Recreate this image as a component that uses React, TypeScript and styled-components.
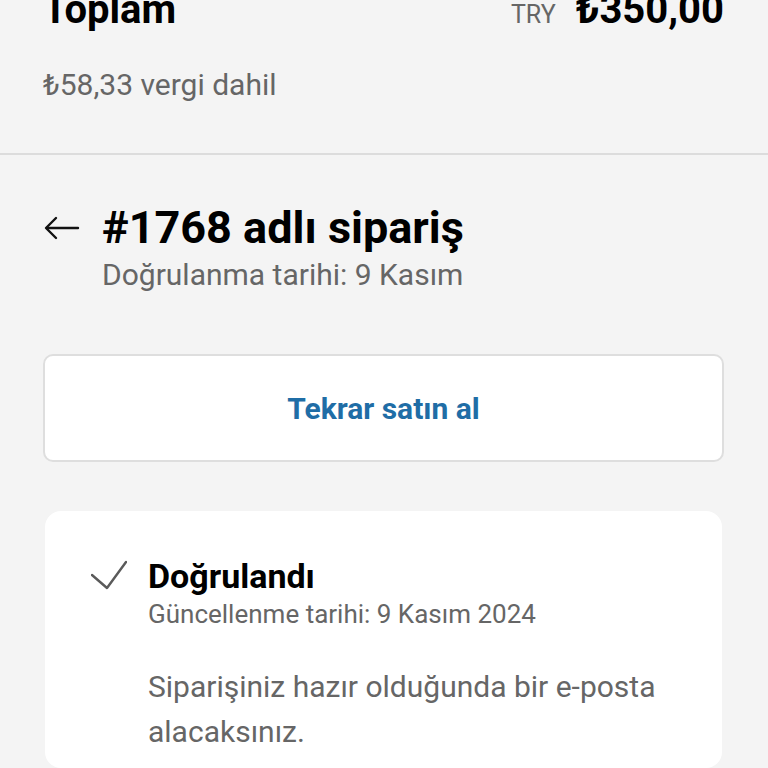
import React from "react";
import styled, { createGlobalStyle } from "styled-components";

const Global = createGlobalStyle`
  html, body { margin: 0; padding: 0; background: #f4f4f4; }
  body { font-family: Roboto, "Noto Sans", sans-serif; color: #000; }
`;

const Page = styled.div`
  width: 768px;
  height: 768px;
  overflow: hidden;
  background: #f4f4f4;
  display: flex;
  flex-direction: column;
`;

const Summary = styled.section`
  padding: 0 44px 0 43px;
  margin-top: -14px;
  border-bottom: 2px solid #dcdcdc;
  height: 169px;
  box-sizing: border-box;
  display: flex;
  flex-direction: column;
  flex: none;
`;

const TotalRow = styled.div`
  display: flex;
  justify-content: space-between;
  align-items: baseline;
  height: 48px;
  line-height: 48px;
`;

const TotalLabel = styled.div`
  font-size: 40px;
  font-weight: 700;
`;

const Amount = styled.div`
  display: flex;
  align-items: baseline;
  gap: 20px;
`;

const Currency = styled.span`
  font-size: 25px;
  color: #666;
`;

const Price = styled.span`
  font-size: 40px;
  font-weight: 700;
`;

const Tax = styled.div`
  margin-top: 33px;
  font-size: 30px;
  line-height: 36px;
  color: #666;
`;

const Header = styled.header`
  display: flex;
  align-items: flex-start;
  gap: 22px;
  padding: 46px 44px 0 44px;
  flex: none;
`;

const BackButton = styled.button`
  border: none;
  background: none;
  padding: 0;
  margin-top: 15px;
  width: 36px;
  height: 24px;
  display: flex;
  align-items: center;
  cursor: pointer;
`;

const HeaderText = styled.div`
  display: flex;
  flex-direction: column;
`;

const Title = styled.h1`
  margin: 0;
  font-size: 45px;
  font-weight: 700;
  line-height: 54px;
`;

const Subtitle = styled.div`
  font-size: 30px;
  color: #666;
  line-height: 40px;
`;

const BuyAgain = styled.button`
  margin: 59px 44px 0 43px;
  height: 108px;
  flex: none;
  background: #fff;
  border: 2px solid #dedede;
  border-radius: 10px;
  font-family: Roboto, sans-serif;
  font-size: 30px;
  font-weight: 700;
  color: #1f6da6;
  cursor: pointer;
`;

const Card = styled.section`
  margin: 49px 46px 0 45px;
  background: #fff;
  border-radius: 16px;
  padding: 44px 48px 0 46px;
  flex: 1;
`;

const StatusRow = styled.div`
  display: flex;
  gap: 21px;
  align-items: flex-start;
`;

const CheckIcon = styled.svg`
  width: 36px;
  height: 36px;
  margin-top: 1px;
  flex: none;
`;

const StatusBody = styled.div`
  display: flex;
  flex-direction: column;
`;

const StatusTitle = styled.div`
  font-size: 34px;
  font-weight: 700;
  line-height: 42px;
`;

const StatusDate = styled.div`
  font-size: 26px;
  color: #666;
  line-height: 34px;
`;

const StatusText = styled.p`
  margin: 33px 0 0 0;
  font-size: 30px;
  color: #666;
  line-height: 45px;
`;

export default function App() {
  return (
    <>
      <Global />
      <Page>
        <Summary>
          <TotalRow>
            <TotalLabel>Toplam</TotalLabel>
            <Amount>
              <Currency>TRY</Currency>
              <Price>₺350,00</Price>
            </Amount>
          </TotalRow>
          <Tax>₺58,33 vergi dahil</Tax>
        </Summary>
        <Header>
          <BackButton aria-label="Geri">
            <svg width="36" height="24" viewBox="0 0 36 24" fill="none" stroke="#111" strokeWidth="2.4" strokeLinecap="round" strokeLinejoin="round">
              <path d="M34 12H3" />
              <path d="M12 2L2 12l10 10" />
            </svg>
          </BackButton>
          <HeaderText>
            <Title>#1768 adlı sipariş</Title>
            <Subtitle>Doğrulanma tarihi: 9 Kasım</Subtitle>
          </HeaderText>
        </Header>
        <BuyAgain>Tekrar satın al</BuyAgain>
        <Card>
          <StatusRow>
            <CheckIcon viewBox="0 0 36 36" fill="none" stroke="#5a5a5a" strokeWidth="2.4" strokeLinecap="round" strokeLinejoin="round">
              <path d="M1 19l15 13L35 6" />
            </CheckIcon>
            <StatusBody>
              <StatusTitle>Doğrulandı</StatusTitle>
              <StatusDate>Güncellenme tarihi: 9 Kasım 2024</StatusDate>
              <StatusText>
                Siparişiniz hazır olduğunda bir e-posta alacaksınız.
              </StatusText>
            </StatusBody>
          </StatusRow>
        </Card>
      </Page>
    </>
  );
}
